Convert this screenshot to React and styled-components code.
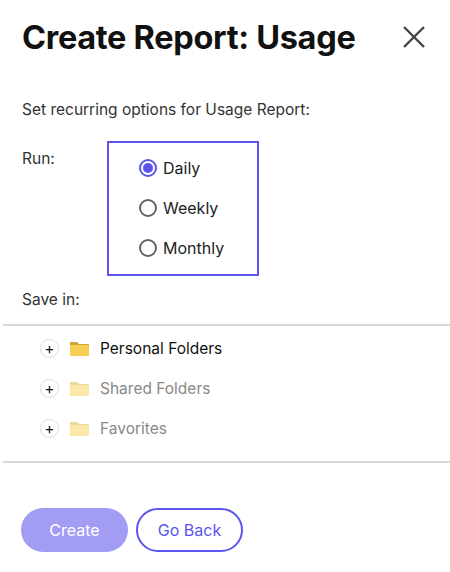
import React, { useState } from "react";
import styled, { createGlobalStyle } from "styled-components";

const Global = createGlobalStyle`
  body { margin: 0; background: #fff; font-family: Inter, "Noto Sans", sans-serif; color: #222; }
`;

const Page = styled.div`
  width: 450px;
  height: 572px;
  display: flex;
  flex-direction: column;
`;

const Header = styled.div`
  display: flex;
  justify-content: space-between;
  align-items: center;
  padding: 17px 24px 0 22px;
  height: 40px;
`;

const Title = styled.h1`
  margin: 0;
  font-size: 32.5px;
  font-weight: 700;
  color: #111;
  letter-spacing: -0.3px;
`;

const Close = styled.button`
  border: none;
  background: none;
  padding: 0;
  display: flex;
  cursor: pointer;
`;

const Intro = styled.p`
  margin: 43px 0 0 22px;
  font-size: 15.5px;
  color: #333;
`;

const RunRow = styled.div`
  display: flex;
  margin-top: 22px;
  padding-left: 22px;
`;

const Label = styled.div`
  width: 85px;
  font-size: 15.5px;
  color: #333;
  padding-top: 8px;
`;

const RadioBox = styled.div`
  width: 152px;
  height: 135px;
  border: 2px solid #5b54f0;
  box-sizing: border-box;
  padding: 14px 0 0 30px;
  display: flex;
  flex-direction: column;
  gap: 18px;
`;

const RadioItem = styled.label`
  display: flex;
  align-items: center;
  gap: 6px;
  font-size: 16px;
  color: #222;
  height: 22px;
  cursor: pointer;
`;

const Dot = styled.span`
  width: 18px;
  height: 18px;
  box-sizing: border-box;
  border-radius: 50%;
  border: 2px solid ${(p) => (p.$on ? "#5b54f0" : "#666")};
  display: flex;
  align-items: center;
  justify-content: center;
  &::after {
    content: "";
    width: 10px;
    height: 10px;
    border-radius: 50%;
    background: ${(p) => (p.$on ? "#5b54f0" : "transparent")};
  }
`;

const SaveLabel = styled.div`
  margin: 14px 0 0 22px;
  font-size: 15.5px;
  color: #333;
`;

const Tree = styled.div`
  margin: 15px 0 0 3px;
  border-top: 2px solid #d8d8d8;
  border-bottom: 2px solid #d8d8d8;
  padding: 11px 0 22px 37px;
  display: flex;
  flex-direction: column;
  gap: 18px;
`;

const TreeRow = styled.div`
  display: flex;
  align-items: center;
  height: 22px;
  font-size: 15.5px;
  color: ${(p) => (p.$dim ? "#888" : "#111")};
`;

const Plus = styled.span`
  width: 17px;
  height: 17px;
  border-radius: 50%;
  border: 1px solid #ddd;
  display: flex;
  align-items: center;
  justify-content: center;
  font-size: 15px;
  color: #111;
  margin-right: 11px;
  line-height: 1;
`;

const Folder = ({ dim }) => (
  <svg width="19" height="15" viewBox="0 0 19 15" style={{ marginRight: 11 }}>
    <path d="M0 1 H7 L9 3 H19 V15 H0 Z" fill={dim ? "#e9d9a0" : "#c9a53a"} />
    <path d="M0 4 H19 V15 H0 Z" fill={dim ? "#fbe7a6" : "#f7cf55"} />
  </svg>
);

const Actions = styled.div`
  display: flex;
  gap: 8px;
  margin: 45px 0 0 21px;
`;

const Btn = styled.button`
  height: 44px;
  width: ${(p) => p.$w}px;
  border-radius: 22px;
  font-family: inherit;
  font-size: 16px;
  box-sizing: border-box;
  cursor: pointer;
  background: ${(p) => (p.$primary ? "#a39cf4" : "#fff")};
  color: ${(p) => (p.$primary ? "#fff" : "#5b54f0")};
  border: ${(p) => (p.$primary ? "none" : "2px solid #5b54f0")};
`;

export default function App() {
  const [run, setRun] = useState("Daily");
  const folders = [
    { name: "Personal Folders", dim: false },
    { name: "Shared Folders", dim: true },
    { name: "Favorites", dim: true },
  ];
  return (
    <Page>
      <Global />
      <Header>
        <Title>Create Report: Usage</Title>
        <Close>
          <svg width="24" height="24" viewBox="0 0 24 24">
            <path d="M2 2 L22 22 M22 2 L2 22" stroke="#444" strokeWidth="2.4" />
          </svg>
        </Close>
      </Header>
      <Intro>Set recurring options for Usage Report:</Intro>
      <RunRow>
        <Label>Run:</Label>
        <RadioBox>
          {["Daily", "Weekly", "Monthly"].map((o) => (
            <RadioItem key={o} onClick={() => setRun(o)}>
              <Dot $on={run === o} />
              {o}
            </RadioItem>
          ))}
        </RadioBox>
      </RunRow>
      <SaveLabel>Save in:</SaveLabel>
      <Tree>
        {folders.map((f) => (
          <TreeRow key={f.name} $dim={f.dim}>
            <Plus>+</Plus>
            <Folder dim={f.dim} />
            {f.name}
          </TreeRow>
        ))}
      </Tree>
      <Actions>
        <Btn $primary $w={107}>Create</Btn>
        <Btn $w={107}>Go Back</Btn>
      </Actions>
    </Page>
  );
}
